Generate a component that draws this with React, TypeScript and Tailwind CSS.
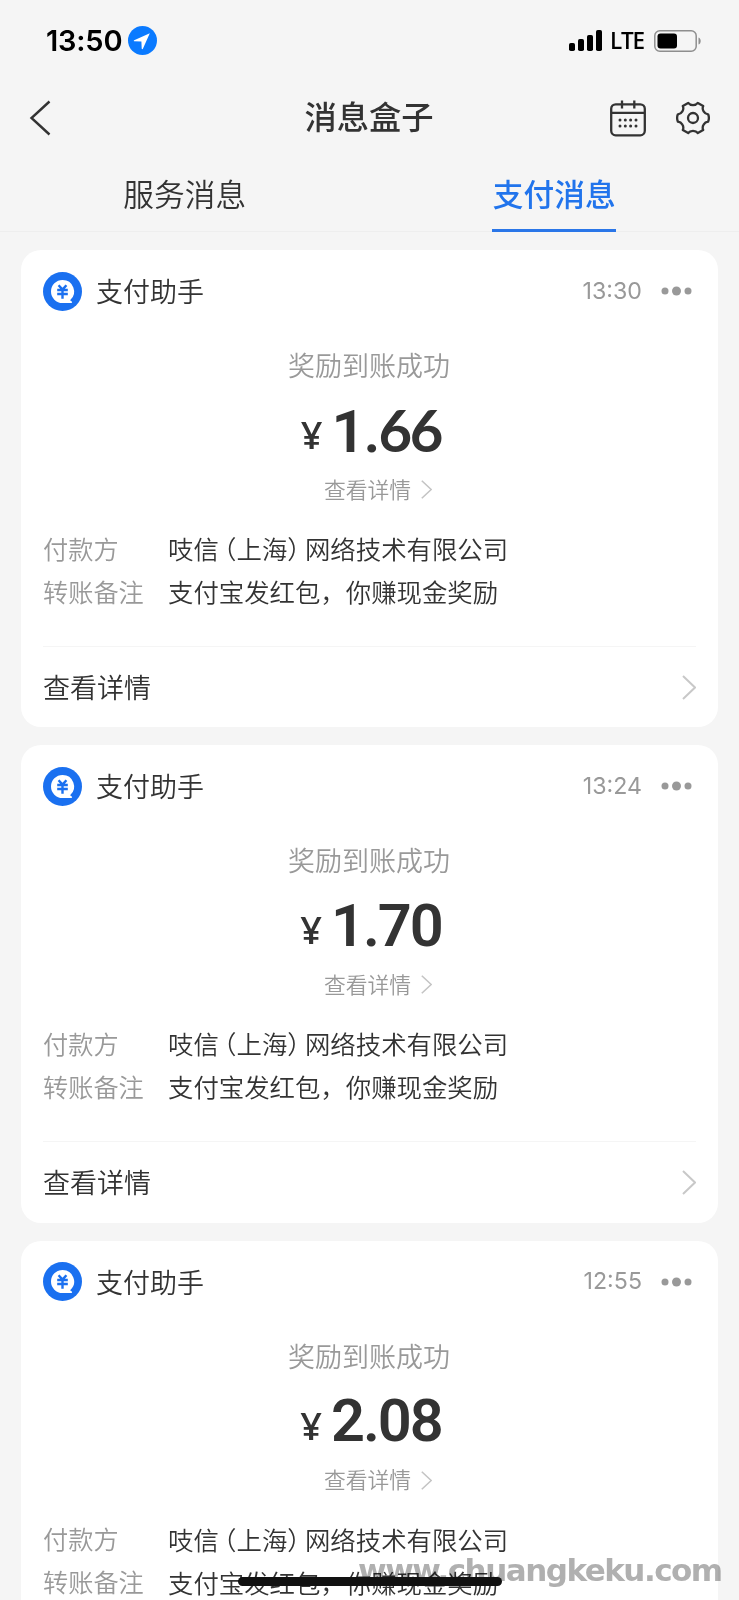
import React from "react";

type Message = { time: string; amount: string };

const messages: Message[] = [
  { time: "13:30", amount: "1.66" },
  { time: "13:24", amount: "1.70" },
  { time: "12:55", amount: "2.08" },
];

function StatusBar() {
  return (
    <div className="flex h-[82px] shrink-0 items-center justify-between pr-[38px] pb-[1px] pl-[46px] text-black">
      <div className="flex items-center gap-[6px]">
        <span className="font-[Inter] text-[29px] leading-none font-semibold tracking-[-0.2px]">13:50</span>
        <svg width="29" height="29" viewBox="0 0 29 29">
          <circle cx="14.5" cy="14.5" r="14.5" fill="#0a7aff" />
          <path d="M21.8 7.2 6.2 14.2c-.6.3-.5 1.1.2 1.1l7 .2.3 7.1c0 .7.9.9 1.2.2z" fill="#fff" />
        </svg>
      </div>
      <div className="flex items-center">
        <svg width="33" height="21" viewBox="0 0 33 21">
          <rect x="0" y="13" width="6" height="8" rx="1.8" />
          <rect x="9" y="9" width="6" height="12" rx="1.8" />
          <rect x="18" y="5" width="6" height="16" rx="1.8" />
          <rect x="27" y="0" width="6" height="21" rx="1.8" />
        </svg>
        <span className="mt-[2px] ml-[8px] w-[34px] font-['Open_Sans'] text-[22.5px] leading-none font-semibold tracking-[-1.2px]">LTE</span>
        <svg className="ml-[10px]" width="47" height="22" viewBox="0 0 47 22">
          <rect x="0.8" y="0.8" width="41.4" height="20.4" rx="5" fill="none" stroke="#8e8e8e" strokeWidth="1.5" />
          <rect x="3.5" y="3.5" width="19.5" height="15" rx="3" />
          <path d="M44.5 7.5c1.5.5 2.2 2 2.2 3.5s-.7 3-2.2 3.5z" fill="#8e8e8e" />
        </svg>
      </div>
    </div>
  );
}

function CalendarIcon() {
  return (
    <svg width="36" height="37" viewBox="0 0 36 37" fill="none" stroke="#333" strokeWidth="2.3">
      <rect x="1.2" y="4.3" width="33.6" height="31" rx="4.5" />
      <path d="M1.1 12.8h33.8M12 .5v8M24.3 .5v8" />
      <g fill="#333" stroke="none">
        {[10, 15.3, 20.6, 26].map((x) => (
          <React.Fragment key={x}>
            <circle cx={x} cy="20" r="1.5" />
            <circle cx={x} cy="26" r="1.5" />
          </React.Fragment>
        ))}
      </g>
    </svg>
  );
}

function GearIcon() {
  return (
    <svg width="34" height="34" viewBox="0 0 34 34" fill="none" stroke="#333" strokeWidth="2.3" strokeLinejoin="round">
      <path d="M12.2 1.9C13.2 3.3 14.9 4.1 17 4.1s3.8-.8 4.8-2.2l5.4 3.1c-.8 1.8-.6 3.8.4 5.4 1 1.7 2.6 2.7 4.5 2.9q1.6 3.7 0 7.4c-1.9.2-3.5 1.2-4.5 2.9-1 1.6-1.2 3.6-.4 5.4l-5.4 3.1C20.8 30.7 19.1 29.9 17 29.9s-3.8.8-4.8 2.2L6.8 29c.8-1.8.6-3.8-.4-5.4-1-1.7-2.6-2.7-4.5-2.9q-1.6-3.7 0-7.4c1.9-.2 3.5-1.2 4.5-2.9 1-1.6 1.2-3.6.4-5.4z" />
      <circle cx="17" cy="17" r="5" />
    </svg>
  );
}

function Chevron({ className }: { className: string }) {
  return (
    <svg className={className} viewBox="0 0 14 25" fill="none" preserveAspectRatio="none">
      <path d="M1 1l12 11.5L1 24" stroke="currentColor" strokeWidth="2" />
    </svg>
  );
}

function PayIcon() {
  return (
    <svg width="39" height="39" viewBox="0 0 39 39">
      <circle cx="19.5" cy="19.5" r="19.5" fill="#1a70f0" />
      <path d="M19.5 8a11.5 11.5 0 1 0 0 23h8.8c.9 0 1.1-.9.4-1.4l-1.6-1.4A11.5 11.5 0 0 0 19.5 8z" fill="#fff" />
      <path d="M15.6 13.2l3.9 4.4 3.9-4.4M14.2 18h10.6M14.2 22h10.6M19.5 17.5v9.3" fill="none" stroke="#1a70f0" strokeWidth="2.4" />
    </svg>
  );
}

function Row({ label, children }: { label: string; children: React.ReactNode }) {
  return (
    <div className="flex h-[43px] items-center text-[25.4px] whitespace-nowrap">
      <span className="mt-[1px] w-[125px] shrink-0 text-[25.2px] text-[#999]">{label}</span>
      <span>{children}</span>
    </div>
  );
}

function Amount({ value }: { value: string }) {
  return (
    <span className="font-[Roboto] text-[59.5px] leading-[60px] font-semibold tracking-[-2px]">
      {value.split(/(6+)/).map((part, i) =>
        part.startsWith("6") ? (
          <span key={i} className="font-[Lato] text-[58px] font-bold tracking-[-2.2px]">
            {part}
          </span>
        ) : (
          part
        ),
      )}
    </span>
  );
}

function MessageCard({ time, amount }: Message) {
  return (
    <article className="h-[477.4px] shrink-0 rounded-[20px] bg-white px-[22px]">
      <header className="flex h-[82px] items-center">
        <PayIcon />
        <h2 className="ml-[14px] flex-1 text-[27px]">支付助手</h2>
        <time className="font-[Inter] text-[23.2px] font-normal text-[#999]">{time}</time>
        <svg className="mr-[4px] ml-[19px]" width="31" height="10" viewBox="0 0 31 10" fill="#999">
          <circle cx="4" cy="5" r="3.5" />
          <circle cx="15.5" cy="5" r="4.5" />
          <circle cx="27" cy="5" r="3.5" />
        </svg>
      </header>
      <p className="mt-[13px] mr-[1px] h-[40px] text-center text-[27px] leading-[40px] text-[#999]">奖励到账成功</p>
      <div className="mt-[15.5px] flex h-[60px] items-center justify-center pl-[3px]">
        <span className="mt-[7px] mr-[9px] font-['Open_Sans'] text-[38px] leading-none font-semibold">¥</span>
        <Amount value={amount} />
      </div>
      <div className="mt-[13.5px] flex h-[30px] items-center justify-center pl-[17px] text-[21.8px] text-[#999]">
        查看详情
        <Chevron className="mt-[1px] ml-[10px] h-[19px] w-[11px] text-[#c4c4c4]" />
      </div>
      <div className="mt-[22.5px]">
        <Row label="付款方">
          吱信<span className="pl-[5px] [font-feature-settings:'halt']">（</span>上海
          <span className="pr-[5px] [font-feature-settings:'halt']">）</span>网络技术有限公司
        </Row>
        <Row label="转账备注">支付宝发红包，你赚现金奖励</Row>
      </div>
      <footer className="mt-[33.5px] flex h-[82px] items-center justify-between border-t border-[#f5f5f5] text-[27px]">
        <span className="mt-[-1px]">查看详情</span>
        <Chevron className="h-[25px] w-[14px] text-[#c8c8c8]" />
      </footer>
    </article>
  );
}

export default function App() {
  return (
    <div className="relative flex h-[1600px] w-[739px] flex-col overflow-hidden bg-[#f5f5f5] font-['Noto_Sans_CJK_SC',sans-serif] font-[350] text-[#333]">
      <StatusBar />
      <nav className="flex h-[72px] shrink-0 items-center justify-between pr-[29px] pl-[29px]">
        <div className="flex w-[107px]">
          <svg width="22" height="36" viewBox="0 0 22 36" fill="none">
            <path d="M20.5 1.5 2.5 18l18 16.5" stroke="#333" strokeWidth="2.4" />
          </svg>
        </div>
        <h1 className="mt-[-5px] text-[32.3px] font-medium">消息盒子</h1>
        <div className="flex w-[108px] items-center justify-end gap-[29.5px]">
          <CalendarIcon />
          <GearIcon />
        </div>
      </nav>
      <div className="flex h-[78px] shrink-0 border-b border-[#eeeeee] text-[30.7px]">
        <div className="flex flex-1 justify-center">
          <span className="h-[78px] leading-[78px]">服务消息</span>
        </div>
        <div className="flex flex-1 justify-center">
          <span className="h-[78px] border-b-[3px] border-[#2a76e8] px-[0.5px] leading-[78px] font-medium text-[#2174ec]">支付消息</span>
        </div>
      </div>
      <main className="flex flex-col gap-[18px] px-[21px] pt-[18px]">
        {messages.map((m) => (
          <MessageCard key={m.time} {...m} />
        ))}
      </main>
      <div className="absolute top-[1550px] left-[358px] font-['DejaVu_Sans'] text-[31px] leading-[40px] font-bold tracking-[-1.5px] text-[#b0b0b0] mix-blend-multiply">
        www.chuangkeku.com
      </div>
      <div className="absolute top-[1577px] left-[238px] h-[9px] w-[264px] rounded-full bg-[#111]" />
    </div>
  );
}
